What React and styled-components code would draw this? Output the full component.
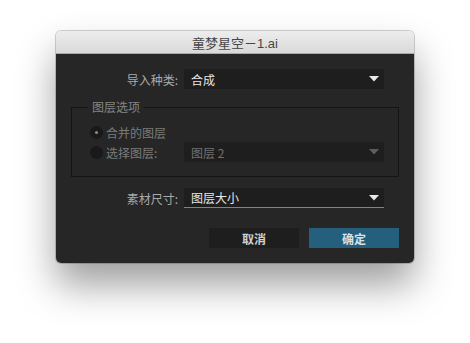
import React from "react";
import styled, { createGlobalStyle } from "styled-components";

const Global = createGlobalStyle`
  html, body { margin: 0; padding: 0; background: #ffffff; }
  body { font-family: "Noto Sans CJK SC", "Liberation Sans", sans-serif; }
  * { box-sizing: border-box; }
`;

const Page = styled.div`
  width: 470px;
  height: 343px;
  padding: 31px 0 0 56px;
`;

const Window = styled.div`
  width: 358px;
  height: 232px;
  border-radius: 5px;
  overflow: hidden;
  display: flex;
  flex-direction: column;
  box-shadow: 0 22px 38px rgba(0, 0, 0, 0.38), 0 0 0 1px rgba(0, 0, 0, 0.18);
`;

const TitleBar = styled.div`
  height: 23px;
  flex: none;
  display: flex;
  align-items: center;
  justify-content: center;
  background: linear-gradient(#ededed, #d9d9d9);
  border-bottom: 1px solid #a9a9a9;
  font-family: "Liberation Sans", "Noto Sans CJK SC", sans-serif;
  font-size: 13px;
  color: #464646;
  padding-top: 1px;
`;

const Body = styled.div`
  flex: 1;
  background: #262626;
  padding: 15px 15px 15px 15px;
  display: flex;
  flex-direction: column;
`;

const FormRow = styled.div`
  display: flex;
  align-items: center;
  height: 20px;
  margin-top: ${(p) => p.$mt || 0}px;
`;

const Label = styled.div`
  width: 113px;
  padding-right: 6px;
  text-align: right;
  font-size: 12px;
  color: #a9a9a9;
  white-space: nowrap;
`;

const Select = styled.div`
  width: 200px;
  height: 20px;
  display: flex;
  align-items: center;
  justify-content: space-between;
  padding: 0 5px 0 7px;
  background: #1e1e1e;
  font-size: 12px;
  color: ${(p) => (p.$disabled ? "#727272" : "#e8e8e8")};
  border-bottom: ${(p) => (p.$focused ? "1px solid #4d93be" : "none")};
`;

const Arrow = ({ color }) => (
  <svg width="10" height="6" viewBox="0 0 10 6">
    <path d="M0 0 H10 L5 5.5 Z" fill={color} />
  </svg>
);

const Group = styled.fieldset`
  margin: 11px 0 0 0;
  padding: 8px 0 14px 18px;
  border: 1px solid #141414;
  min-width: 0;
`;

const Legend = styled.legend`
  padding: 0 4px;
  margin-left: -2px;
  font-size: 12px;
  line-height: 14px;
  color: #858585;
`;

const RadioRow = styled.div`
  display: flex;
  align-items: center;
  height: 20px;
`;

const RadioLabel = styled.div`
  display: flex;
  align-items: center;
  gap: 3px;
  width: 94px;
  font-size: 12px;
  color: #7b7b7b;
  white-space: nowrap;
`;

const Radio = styled.span`
  width: 13px;
  height: 13px;
  border-radius: 50%;
  background: #191919;
  display: flex;
  align-items: center;
  justify-content: center;
  flex: none;
  &::after {
    content: "";
    display: ${(p) => (p.$checked ? "block" : "none")};
    width: 3px;
    height: 3px;
    border-radius: 50%;
    background: #8a8a8a;
  }
`;

const Buttons = styled.div`
  display: flex;
  justify-content: flex-end;
  gap: 10px;
  margin-top: 20px;
`;

const Button = styled.div`
  width: 90px;
  height: 20px;
  display: flex;
  align-items: center;
  justify-content: center;
  font-size: 12px;
  font-weight: 700;
  background: ${(p) => (p.$primary ? "#245f7e" : "#1e1e1e")};
  color: ${(p) => (p.$primary ? "#d6e2e8" : "#cfcfcf")};
`;

export default function App() {
  return (
    <Page>
      <Global />
      <Window>
        <TitleBar>童梦星空－1.ai</TitleBar>
        <Body>
          <FormRow>
            <Label>导入种类:</Label>
            <Select>
              <span>合成</span>
              <Arrow color="#e8e8e8" />
            </Select>
          </FormRow>
          <Group>
            <Legend>图层选项</Legend>
            <RadioRow>
              <RadioLabel>
                <Radio $checked />
                合并的图层
              </RadioLabel>
            </RadioRow>
            <RadioRow>
              <RadioLabel>
                <Radio />
                选择图层:
              </RadioLabel>
              <Select $disabled>
                <span>图层 2</span>
                <Arrow color="#5e5e5e" />
              </Select>
            </RadioRow>
          </Group>
          <FormRow $mt={11}>
            <Label>素材尺寸:</Label>
            <Select $focused>
              <span>图层大小</span>
              <Arrow color="#e8e8e8" />
            </Select>
          </FormRow>
          <Buttons>
            <Button>取消</Button>
            <Button $primary>确定</Button>
          </Buttons>
        </Body>
      </Window>
    </Page>
  );
}
